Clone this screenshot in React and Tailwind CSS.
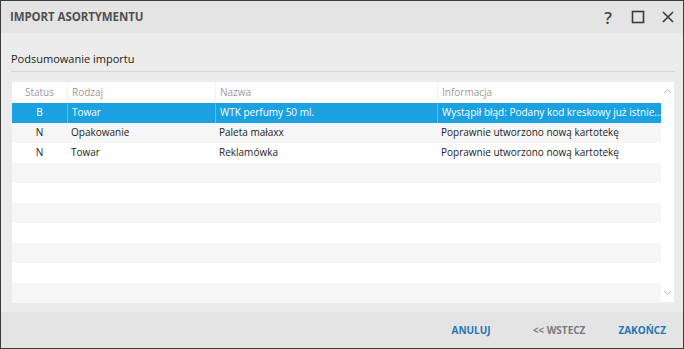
import React from 'react';

const rows = [
  { status: 'B', kind: 'Towar', name: 'WTK perfumy 50 ml.', info: 'Wystąpił błąd: Podany kod kreskowy już istnie...', selected: true },
  { status: 'N', kind: 'Opakowanie', name: 'Paleta małaxx', info: 'Poprawnie utworzono nową kartotekę' },
  { status: 'N', kind: 'Towar', name: 'Reklamówka', info: 'Poprawnie utworzono nową kartotekę' },
];

const font = { fontFamily: '"Open Sans", "Noto Sans", sans-serif' };

export default function App() {
  const filled = [...rows];
  while (filled.length < 10) filled.push(null);

  return (
    <div className="w-[684px] h-[349px] border border-[#3c3c3c] bg-[#ececec] flex flex-col overflow-hidden" style={font}>
      {/* title bar */}
      <div className="h-[32px] bg-[#e4e4e4] flex items-center pl-[9px] pr-[8px] shrink-0">
        <span className="text-[11.5px] font-bold text-[#505050] tracking-[-0.1px]">IMPORT ASORTYMENTU</span>
        <div className="ml-auto flex items-center gap-[16px] text-[#3a3a3a]">
          <span className="text-[17px] leading-none w-[14px] text-center font-semibold text-[#444]">?</span>
          <svg width="14" height="14" viewBox="0 0 14 14"><rect x="1.5" y="1.5" width="11" height="11" fill="none" stroke="currentColor" strokeWidth="1.6" /></svg>
          <svg width="14" height="14" viewBox="0 0 14 14"><path d="M2 2L12 12M12 2L2 12" stroke="currentColor" strokeWidth="1.6" /></svg>
        </div>
      </div>

      {/* body */}
      <div className="flex-1 flex flex-col px-[10px] pt-[18px]">
        <div className="text-[11px] text-[#222] pb-[3px] border-b border-[#d6d6d6] mr-[-2px]">Podsumowanie importu</div>

        <div className="mt-[10px] ml-[1px] mr-[-1px] bg-white flex h-[220px]">
          <div className="w-[649px] text-[10px]">
            <div className="flex h-[21px] items-center text-[#9a9a9a]">
              <div className="w-[55px] text-center">Status</div>
              <div className="w-[148px] pl-[4px] h-full flex items-center border-l border-dotted border-[#e6e6e6]">Rodzaj</div>
              <div className="w-[222px] pl-[4px] h-full flex items-center border-l border-dotted border-[#e6e6e6]">Nazwa</div>
              <div className="w-[224px] pl-[4px] h-full flex items-center border-l border-dotted border-[#e6e6e6]">Informacja</div>
            </div>
            {filled.map((r, i) => {
              const bg = r && r.selected ? 'bg-[#1ba1e2] text-white' : i % 2 === 1 ? 'bg-[#f6f6f6] text-[#222]' : 'bg-white text-[#222]';
              const sep = r && r.selected ? 'border-l border-[#5fbdea]' : '';
              return (
                <div key={i} className={`flex h-[20px] items-center ${bg}`}>
                  {r && (
                    <>
                      <div className="w-[55px] text-center">{r.status}</div>
                      <div className={`w-[148px] pl-[4px] h-full flex items-center ${sep}`}>{r.kind}</div>
                      <div className={`w-[222px] pl-[4px] h-full flex items-center ${sep}`}>{r.name}</div>
                      <div className={`w-[224px] pl-[4px] h-full flex items-center whitespace-nowrap ${sep}`}>{r.info}</div>
                    </>
                  )}
                </div>
              );
            })}
          </div>
          <div className="w-[15px] flex flex-col items-center justify-between py-[6px] text-[#b5b5b5]">
            <svg width="9" height="6" viewBox="0 0 9 6"><path d="M1 5L4.5 1.5L8 5" fill="none" stroke="currentColor" strokeWidth="1" /></svg>
            <svg width="9" height="6" viewBox="0 0 9 6"><path d="M1 1L4.5 4.5L8 1" fill="none" stroke="currentColor" strokeWidth="1" /></svg>
          </div>
        </div>
      </div>

      {/* footer */}
      <div className="h-[36px] bg-[#e4e4e4] flex items-center justify-end pr-[17px] text-[10px] font-bold shrink-0">
        <span className="text-[#1f77b4]">ANULUJ</span>
        <span className="text-[#7a7a7a] ml-[42px]">&lt;&lt; WSTECZ</span>
        <span className="text-[#1f77b4] ml-[33px]">ZAKOŃCZ</span>
      </div>
    </div>
  );
}
